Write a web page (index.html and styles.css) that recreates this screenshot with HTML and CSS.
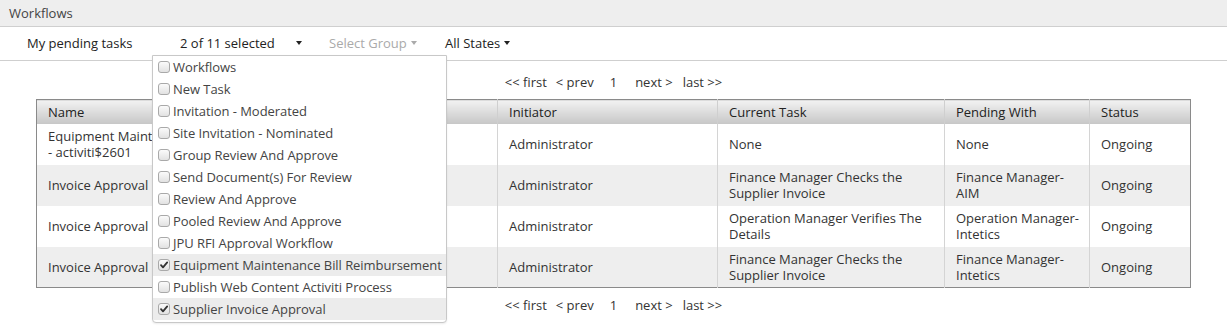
FILE: index.html
```html
<!DOCTYPE html>
<html>
<head>
<meta charset="utf-8">
<title>Workflows</title>
<link rel="stylesheet" href="styles.css">
</head>
<body>
<div class="titlebar">Workflows</div>
<div class="toolbar">
  <span class="tb-item pending">My pending tasks</span>
  <div class="multiselect">
    <div class="ms-btn"><span>2 of 11 selected</span><span class="caret"></span></div>
    <ul class="ms-menu">
      <li class="ms-item"><span class="cb"></span>Workflows</li>
      <li class="ms-item"><span class="cb"></span>New Task</li>
      <li class="ms-item"><span class="cb"></span>Invitation - Moderated</li>
      <li class="ms-item"><span class="cb"></span>Site Invitation - Nominated</li>
      <li class="ms-item"><span class="cb"></span>Group Review And Approve</li>
      <li class="ms-item"><span class="cb"></span>Send Document(s) For Review</li>
      <li class="ms-item"><span class="cb"></span>Review And Approve</li>
      <li class="ms-item"><span class="cb"></span>Pooled Review And Approve</li>
      <li class="ms-item"><span class="cb"></span>JPU RFI Approval Workflow</li>
      <li class="ms-item checked"><span class="cb"><svg viewBox="0 0 12 12" width="12" height="12"><path d="M3 6.2 L5 8.4 L9.2 3.4" fill="none" stroke="#333" stroke-width="1.8" stroke-linecap="round" stroke-linejoin="round"/></svg></span>Equipment Maintenance Bill Reimbursement</li>
      <li class="ms-item"><span class="cb"></span>Publish Web Content Activiti Process</li>
      <li class="ms-item checked"><span class="cb"><svg viewBox="0 0 12 12" width="12" height="12"><path d="M3 6.2 L5 8.4 L9.2 3.4" fill="none" stroke="#333" stroke-width="1.8" stroke-linecap="round" stroke-linejoin="round"/></svg></span>Supplier Invoice Approval</li>
    </ul>
  </div>
  <span class="tb-item group disabled">Select Group<span class="caret"></span></span>
  <span class="tb-item states">All States<span class="caret"></span></span>
</div>
<div class="content">
  <div class="pager top">
    <span class="pg first">&lt;&lt; first</span>
    <span class="pg prev">&lt; prev</span>
    <span class="pg num">1</span>
    <span class="pg next">next &gt;</span>
    <span class="pg last">last &gt;&gt;</span>
  </div>
  <table class="grid">
    <colgroup>
      <col class="c-name"><col class="c-date"><col class="c-init"><col class="c-task"><col class="c-pend"><col class="c-status">
    </colgroup>
    <thead>
      <tr><th>Name</th><th>Started</th><th>Initiator</th><th>Current Task</th><th>Pending With</th><th>Status</th></tr>
    </thead>
    <tbody>
      <tr><td>Equipment Maintenance Bill Reimbursement <span class="nowrap">- activiti$2601</span></td><td>10/12/2014</td><td>Administrator</td><td>None</td><td>None</td><td>Ongoing</td></tr>
      <tr class="alt"><td>Invoice Approval</td><td>10/12/2014</td><td>Administrator</td><td>Finance Manager Checks the Supplier Invoice</td><td>Finance Manager-AIM</td><td>Ongoing</td></tr>
      <tr><td>Invoice Approval</td><td>10/12/2014</td><td>Administrator</td><td>Operation Manager Verifies The Details</td><td>Operation Manager-Intetics</td><td>Ongoing</td></tr>
      <tr class="alt"><td>Invoice Approval</td><td>10/12/2014</td><td>Administrator</td><td>Finance Manager Checks the Supplier Invoice</td><td>Finance Manager-Intetics</td><td>Ongoing</td></tr>
    </tbody>
  </table>
  <div class="pager bottom">
    <span class="pg first">&lt;&lt; first</span>
    <span class="pg prev">&lt; prev</span>
    <span class="pg num">1</span>
    <span class="pg next">next &gt;</span>
    <span class="pg last">last &gt;&gt;</span>
  </div>
</div>
</body>
</html>
```
FILE: styles.css
```css
html, body {
  margin: 0;
  padding: 0;
  background: #fff;
}
html {
  min-height: 328px;
}
body {
  min-height: 328px;
  font-family: "Open Sans", "Liberation Sans", sans-serif;
  font-size: 13px;
  color: #333;
}

.titlebar {
  height: 26px;
  line-height: 26px;
  background: #eeeeee;
  border-bottom: 1px solid #cfcfcf;
  padding-left: 9px;
  color: #444;
}

.toolbar {
  display: flex;
  align-items: center;
  box-sizing: border-box;
  height: 34px;
  padding-bottom: 2px;
  border-bottom: 1px solid #cfcfcf;
  padding-left: 27px;
  color: #222;
}
.tb-item {
  display: flex;
  align-items: center;
  white-space: nowrap;
}
.pending {
  width: 125px;
}
.multiselect {
  position: relative;
  align-self: stretch;
  width: 177px;
  z-index: 5;
}
.ms-btn {
  display: flex;
  align-items: center;
  height: 100%;
  padding-left: 28px;
  white-space: nowrap;
}
.ms-btn .caret {
  margin-left: 21px;
}
.caret {
  display: inline-block;
  width: 0;
  height: 0;
  border-top: 4px solid #222;
  border-left: 3.5px solid transparent;
  border-right: 3.5px solid transparent;
  margin-left: 4px;
  margin-top: 1px;
}
.disabled {
  color: #aaa;
}
.disabled .caret {
  border-top-color: #aaa;
}
.group {
  width: 116px;
}

.ms-menu {
  position: absolute;
  top: 28px;
  left: 0;
  width: 293px;
  margin: 0;
  padding: 0 0 2px 0;
  list-style: none;
  background: #fff;
  border: 1px solid #c8c8c8;
  border-radius: 0 0 4px 4px;
  box-shadow: 0 1px 2px rgba(0,0,0,0.08);
  overflow: hidden;
}
.ms-item {
  display: flex;
  align-items: center;
  height: 22px;
  padding-left: 5px;
  color: #444;
  white-space: nowrap;
  letter-spacing: -0.05px;
}
.ms-item.checked {
  background: #ececec;
}
.cb {
  display: inline-block;
  box-sizing: border-box;
  width: 12px;
  height: 12px;
  border: 1px solid #a9a9a9;
  border-radius: 3px;
  background: linear-gradient(#fbfbfb, #e2e2e2);
  margin-right: 3px;
  position: relative;
}
.cb svg {
  position: absolute;
  left: -1px;
  top: -1px;
}

.content {
  padding-top: 12px;
}
.pager {
  display: flex;
  justify-content: center;
  line-height: 18px;
  color: #333;
}
.pager.top {
  margin-bottom: 8px;
}
.pager.bottom {
  margin-top: 8px;
}
.pg.prev { margin-left: 9px; }
.pg.num { margin-left: 16px; }
.pg.next { margin-left: 18px; }
.pg.last { margin-left: 10px; }

.grid {
  width: 1155px;
  margin: 0 auto;
  border-collapse: collapse;
  table-layout: fixed;
  border: 1px solid #8a8a8a;
}
.c-name { width: 304px; }
.c-date { width: 157px; }
.c-init { width: 220px; }
.c-task { width: 227px; }
.c-pend { width: 145px; }
.c-status { width: 101px; }

.nowrap {
  white-space: nowrap;
}

.grid th {
  height: 24px;
  padding: 0 10px 0 11px;
  text-align: left;
  font-weight: normal;
  color: #222;
  background: linear-gradient(#f2f2f2, #c6c6c6);
  border-left: 1px solid #cfcfcf;
  box-sizing: border-box;
}
.grid td {
  height: 41px;
  padding: 4px 10px 4px 11px;
  line-height: 16px;
  vertical-align: middle;
  border-left: 1px solid #d4d4d4;
  color: #333;
  box-sizing: border-box;
}
.grid th:first-child,
.grid td:first-child {
  border-left: none;
}
.grid tr.alt td {
  background: #eeeeee;
}
```
